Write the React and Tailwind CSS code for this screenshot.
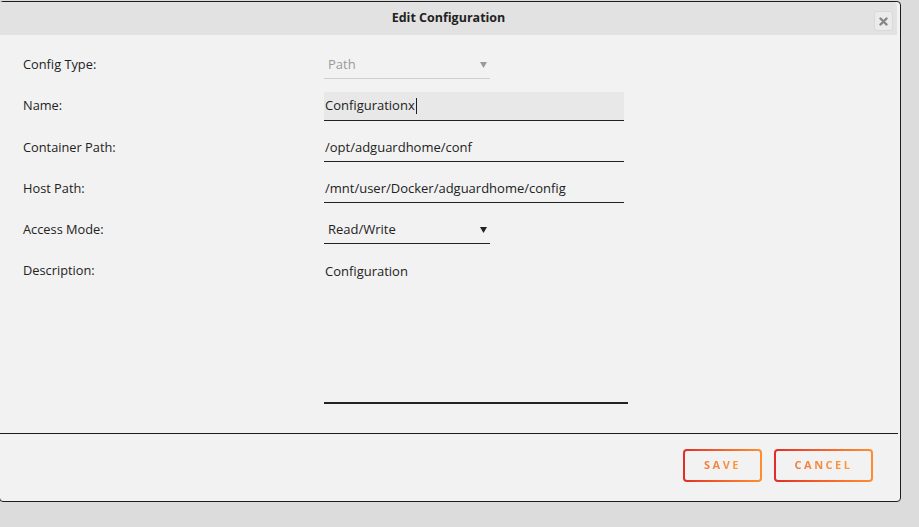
import React from "react";

const font = { fontFamily: '"Open Sans", "Noto Sans", sans-serif' };

function Label({ children }) {
  return (
    <div className="w-[324px] pl-[23px] h-[28px] flex items-center text-[12.8px] text-[#222]">
      {children}
    </div>
  );
}

function Arrow({ color }) {
  return (
    <svg width="7" height="7" viewBox="0 0 7 7" className="mr-[1px]">
      <path d="M0 1 L7 1 L3.5 7 Z" fill={color} />
    </svg>
  );
}

function GradButton({ w, children }) {
  return (
    <div className={`${w} h-[33px] p-[2px] rounded-[4px] bg-gradient-to-r from-[#e22a28] to-[#ff8d2f]`}>
      <div className="w-full h-full rounded-[2px] bg-[#f2f2f2] flex items-center justify-center">
        <span className="text-[11px] font-bold tracking-[2.5px] bg-gradient-to-r from-[#f07a3a] to-[#ff9a3c] bg-clip-text text-transparent">
          {children}
        </span>
      </div>
    </div>
  );
}

export default function App() {
  return (
    <div className="w-[919px] h-[527px] bg-[#dcdcdc] overflow-hidden pt-px" style={font}>
      <div className="-ml-px w-[902px] h-[501px] border border-[#1d1d1d] rounded-[4px] bg-[#f2f2f2] flex flex-col">
        <div className="mr-[3px] h-[33px] bg-[#e2e2e2] rounded-tr-[4px] flex items-center relative">
          <div className="flex-1 text-center text-[12.5px] font-bold text-[#222]">Edit Configuration</div>
          <div className="absolute right-[4px] top-[9px] w-[19px] h-[20px] rounded-[3px] bg-[#ebebeb] border border-[#d9d9d9] flex items-center justify-center">
            <svg width="9" height="9" viewBox="0 0 9 9">
              <path d="M1.5 1.5 L7.5 7.5 M7.5 1.5 L1.5 7.5" stroke="#858585" strokeWidth="2.4" strokeLinecap="round" />
            </svg>
          </div>
        </div>

        <div className="pt-[16px] flex flex-col gap-[13px]">
          <div className="flex">
            <Label>Config Type:</Label>
            <div className="w-[166px] h-[28px] border-b border-[#cfcfcf] flex items-center justify-between pl-[4px] pr-[2px] text-[13px] text-[#9a9a9a]">
              <span>Path</span>
              <Arrow color="#9a9a9a" />
            </div>
          </div>
          <div className="flex">
            <Label>Name:</Label>
            <div className="w-[300px] h-[29px] bg-[#e8e8e8] border-b border-[#222] flex items-center pl-[1px] text-[13px] text-[#222]">
              <span>Configurationx</span>
              <span className="w-px h-[16px] bg-[#222] ml-px" />
            </div>
          </div>
          <div className="flex">
            <Label>Container Path:</Label>
            <div className="w-[300px] h-[28px] border-b border-[#222] flex items-center pl-[1px] text-[13px] text-[#222]">
              /opt/adguardhome/conf
            </div>
          </div>
          <div className="flex">
            <Label>Host Path:</Label>
            <div className="w-[300px] h-[28px] border-b border-[#222] flex items-center pl-[1px] text-[13px] text-[#222]">
              /mnt/user/Docker/adguardhome/config
            </div>
          </div>
          <div className="flex">
            <Label>Access Mode:</Label>
            <div className="w-[166px] h-[28px] border-b border-[#222] flex items-center justify-between pl-[4px] pr-[2px] text-[13px] text-[#222]">
              <span>Read/Write</span>
              <Arrow color="#222" />
            </div>
          </div>
          <div className="flex">
            <Label>Description:</Label>
            <div className="w-[304px] h-[147px] border-b-2 border-[#222] pl-[1px] pt-[5px] text-[13px] text-[#222]">
              Configuration
            </div>
          </div>
        </div>

        <div className="mt-[29px] mr-[2px] h-px bg-[#1d1d1d]" />

        <div className="flex justify-end gap-[12px] pr-[27px] pt-[15px]">
          <GradButton w="w-[79px]">SAVE</GradButton>
          <GradButton w="w-[99px]">CANCEL</GradButton>
        </div>
      </div>
    </div>
  );
}
